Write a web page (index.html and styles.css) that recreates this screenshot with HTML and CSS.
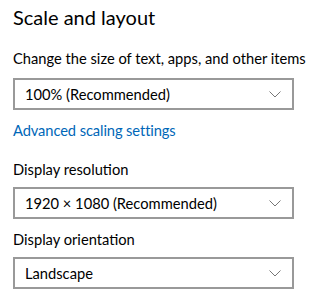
FILE: index.html
```html
<!DOCTYPE html>
<html lang="en">
<head>
  <meta charset="UTF-8" />
  <title>Scale and layout</title>
  <link rel="stylesheet" href="styles.css">
</head>
<body>

  <section class="settings">
    <h1 class="title">Scale and layout</h1>

    <p class="label">Change the size of text, apps, and other items</p>
    <div class="dropdown">
      <span>100% (Recommended)</span>
      <svg class="chevron" width="12" height="7" viewBox="0 0 12 7"><path d="M0.5 0.5 L6 6 L11.5 0.5" fill="none" stroke="#777" stroke-width="1"/></svg>
    </div>

    <a class="link" href="#">Advanced scaling settings</a>

    <p class="label">Display resolution</p>
    <div class="dropdown">
      <span>1920 × 1080 (Recommended)</span>
      <svg class="chevron" width="12" height="7" viewBox="0 0 12 7"><path d="M0.5 0.5 L6 6 L11.5 0.5" fill="none" stroke="#777" stroke-width="1"/></svg>
    </div>

    <p class="label">Display orientation</p>
    <div class="dropdown">
      <span>Landscape</span>
      <svg class="chevron" width="12" height="7" viewBox="0 0 12 7"><path d="M0.5 0.5 L6 6 L11.5 0.5" fill="none" stroke="#777" stroke-width="1"/></svg>
    </div>
  </section>

</body>
</html>
```

FILE: styles.css
```css
body {
  margin: 0;
  background: #fff;
  color: #000;
  font-family: Lato, 'Open Sans', sans-serif;
}

.settings {
  width: 281px;
  padding: 3px 0 0 13px;
}

.title {
  margin: 0;
  font-size: 20px;
  font-weight: 400;
  line-height: 28px;
}

.label {
  margin: 17px 0 10px;
  font-size: 14.7px;
  line-height: 20px;
  white-space: nowrap;
}

.dropdown {
  display: flex;
  justify-content: space-between;
  align-items: center;
  height: 32px;
  box-sizing: border-box;
  border: 2px solid #999;
  padding: 0 10px;
  font-size: 14.7px;
}

.chevron {
  margin-right: 1px;
}

.link {
  display: block;
  margin-top: 10px;
  color: #0067b8;
  text-decoration: none;
  font-size: 14.7px;
  letter-spacing: -0.1px;
  line-height: 20px;
}

.link + .label {
  margin-top: 19px;
  margin-bottom: 8px;
}

.dropdown + .label {
  margin-top: 10px;
  margin-bottom: 8px;
}
```
